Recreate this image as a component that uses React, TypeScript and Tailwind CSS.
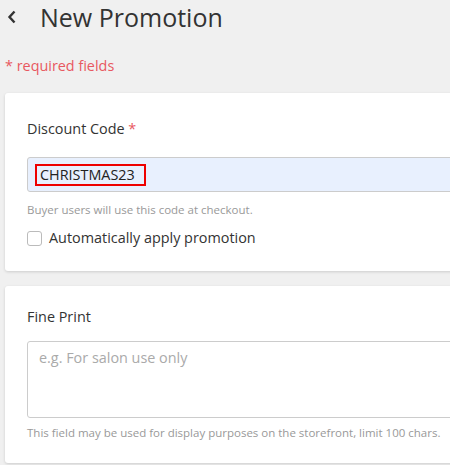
import React, { useState } from 'react';

export default function App() {
  const [code, setCode] = useState('CHRISTMAS23');
  const [autoApply, setAutoApply] = useState(false);
  const [finePrint, setFinePrint] = useState('');

  return (
    <div
      className="w-[450px] h-[465px] overflow-hidden bg-[#f0f0f0] text-[#333]"
      style={{ fontFamily: '"Open Sans", sans-serif' }}
    >
      <div className="flex items-center h-[34px]">
        <button className="w-[40px] flex items-center pl-[7px] text-[#333]">
          <svg width="10" height="14" viewBox="0 0 10 14" fill="none">
            <path d="M7.5 1.5 L2.5 7 L7.5 12.5" stroke="currentColor" strokeWidth="2.4" />
          </svg>
        </button>
        <h1 className="text-[25px] leading-[32px] text-[#333]">New Promotion</h1>
      </div>

      <p className="pl-[5px] mt-[22px] text-[14.4px] leading-[20px] text-[#e8585f]">* required fields</p>

      <div className="ml-[5px] mt-[17px] w-[480px] bg-white rounded-[3px] shadow-[0_1px_3px_rgba(0,0,0,0.15)] px-[22px] pt-[26px] pb-[23px]">
        <label className="block text-[14.4px] leading-[20px] text-[#333]">
          Discount Code <span className="text-[#e8585f]">*</span>
        </label>
        <div className="mt-[18px] h-[35px] border border-[#ccc] rounded-[3px] bg-[#e8f0fe] flex items-center pl-[7px]">
          <input
            value={code}
            onChange={(e) => setCode(e.target.value)}
            className="w-[111px] h-[22px] border-2 border-[#e00] bg-transparent px-[3px] text-[14.4px] text-[#222] outline-none"
          />
        </div>
        <p className="mt-[10px] text-[11.5px] leading-[16px] text-[#999]">Buyer users will use this code at checkout.</p>
        <label className="mt-[10px] flex items-center gap-[7px] text-[14.4px] leading-[20px] text-[#333]">
          <input
            type="checkbox"
            checked={autoApply}
            onChange={(e) => setAutoApply(e.target.checked)}
            className="appearance-none w-[15px] h-[15px] border border-[#bbb] rounded-[3px] bg-white"
          />
          Automatically apply promotion
        </label>
      </div>

      <div className="ml-[5px] mt-[15px] w-[480px] bg-white rounded-[3px] shadow-[0_1px_3px_rgba(0,0,0,0.15)] px-[22px] pt-[21px] pb-[22px]">
        <label className="block text-[14.4px] leading-[20px] text-[#333]">Fine Print</label>
        <textarea
          value={finePrint}
          onChange={(e) => setFinePrint(e.target.value)}
          placeholder="e.g. For salon use only"
          className="mt-[14px] block w-full h-[77px] border border-[#ccc] rounded-[3px] px-[11px] py-[6px] text-[14.4px] leading-[20px] placeholder:text-[#aaa] resize-none outline-none"
        />
        <p className="mt-[7px] text-[11.5px] leading-[16px] text-[#999]">
          This field may be used for display purposes on the storefront, limit 100 chars.
        </p>
      </div>
    </div>
  );
}
